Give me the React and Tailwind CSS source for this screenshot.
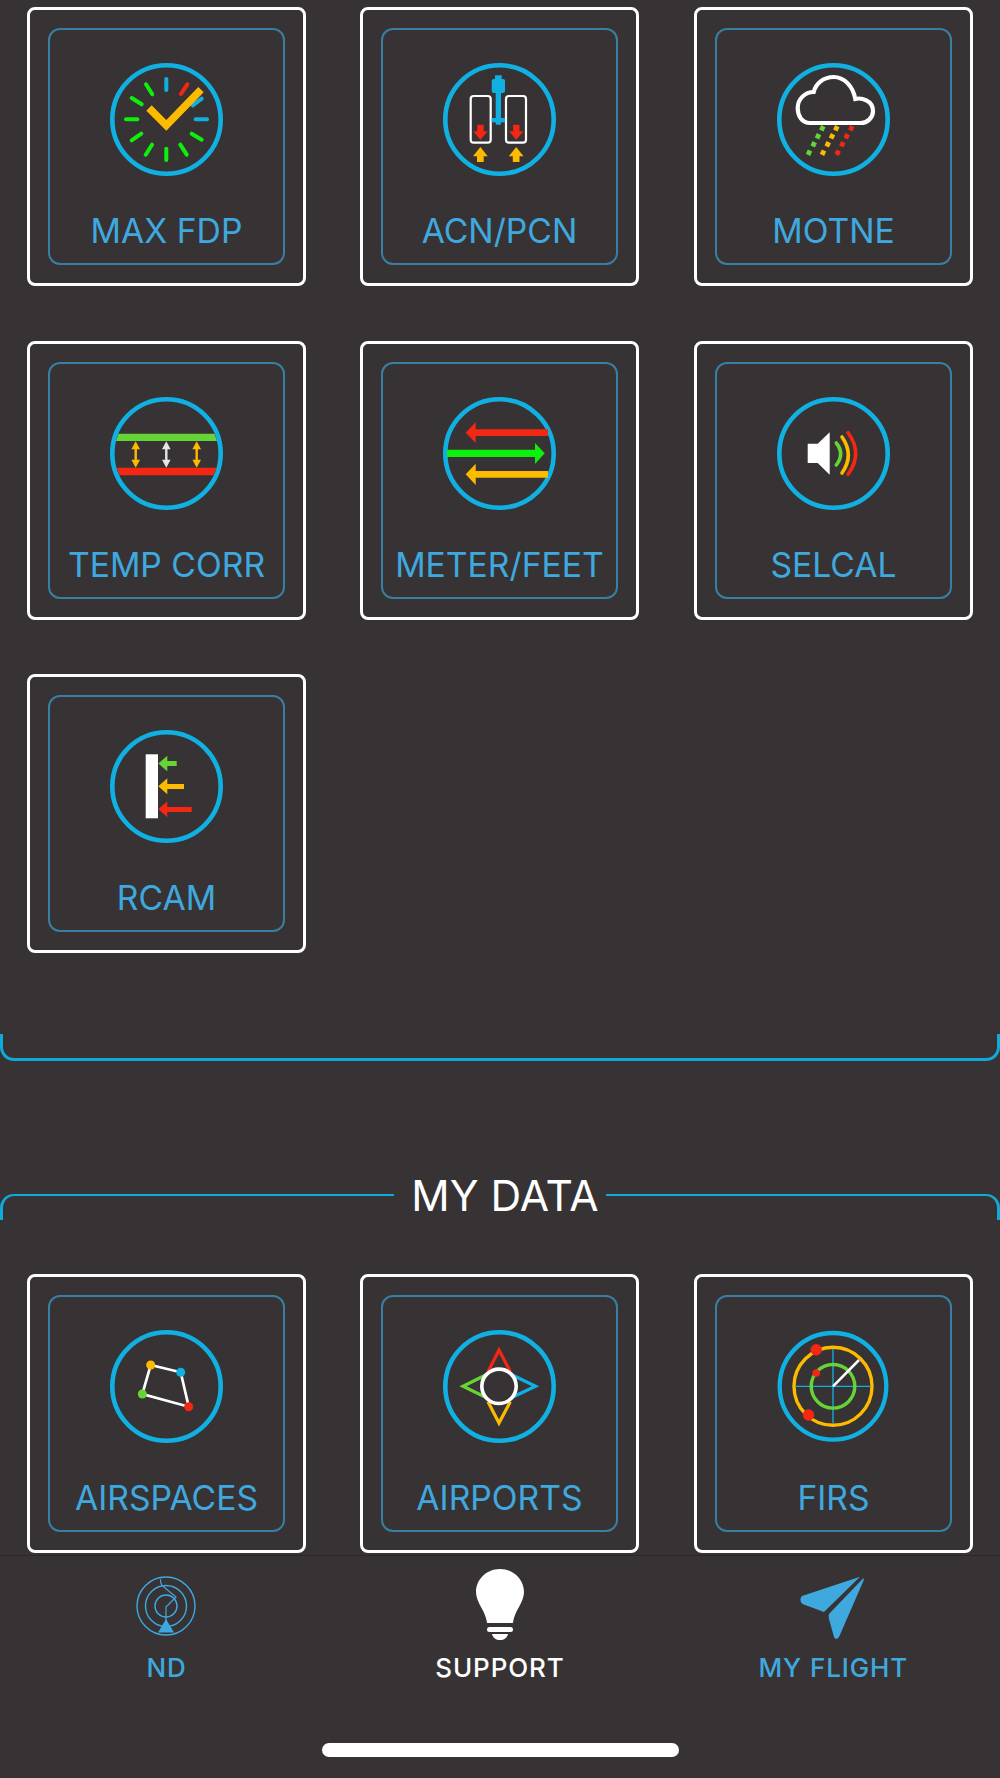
import React from 'react'

const BLUE = '#10b1e2'
const YELLOW = '#fdbb00'
const RED = '#f32713'
const GREEN = '#66d436'
const LIME = '#0cf00c'

// Shared circle frame for the tile icons
function Icon({ children, ring = true }) {
  return (
    <svg width="113" height="113" viewBox="0 0 113 113" fill="none" className="block shrink-0">
      {ring && <circle cx="56.5" cy="56.5" r="54.2" stroke={BLUE} strokeWidth="4.6" />}
      {children}
    </svg>
  )
}

function MaxFdpIcon() {
  const ticks = [
    [56.3, 16, 56.3, 27, BLUE],
    [77.3, 21.3, 71, 31, RED],
    [91.7, 35.7, 82.7, 42.3, BLUE],
    [85.7, 56.3, 97, 56.3, BLUE],
    [81.7, 70.7, 91.7, 76.7, LIME],
    [70.3, 81.7, 76.7, 91.7, LIME],
    [56.3, 85.7, 56.3, 97, LIME],
    [42, 81.7, 35.7, 91.7, LIME],
    [31.3, 70.7, 21.7, 77.3, LIME],
    [16, 56.3, 27.3, 56.3, LIME],
    [21.7, 35, 31.7, 41.3, LIME],
    [36, 21.3, 42.3, 31.3, LIME],
  ]
  return (
    <Icon>
      {ticks.map(([x1, y1, x2, y2, c], i) => (
        <line key={i} x1={x1} y1={y1} x2={x2} y2={y2} stroke={c} strokeWidth="4" strokeLinecap="round" />
      ))}
      <path d="M39 45 L56.3 62.3 L91 26.7" stroke={YELLOW} strokeWidth="7.5" />
    </Icon>
  )
}

function AcnIcon() {
  return (
    <Icon>
      <rect x="27.7" y="33" width="20" height="46.7" rx="3" stroke="#fff" strokeWidth="2.2" />
      <rect x="63" y="33" width="20" height="46.7" rx="3" stroke="#fff" strokeWidth="2.2" />
      <rect x="52" y="12.3" width="6.7" height="6" fill={BLUE} />
      <rect x="48.7" y="16" width="13.3" height="14" rx="2" fill={BLUE} />
      <rect x="52.7" y="28" width="5.3" height="33.7" rx="1" fill={BLUE} />
      <rect x="48.7" y="55" width="13.3" height="4.3" fill={BLUE} />
      {[0, 35.8].map(dx => (
        <g key={dx} transform={`translate(${dx} 0)`}>
          <path d="M34.3 61.7 H40.7 V68.3 H44.7 L37.4 76.7 L30.3 68.3 H34.3 Z" fill={RED} />
          <path d="M37.4 84 L44.7 93.3 H40.7 V99 H34 V93.3 H30 Z" fill={YELLOW} />
        </g>
      ))}
    </Icon>
  )
}

function MotneIcon() {
  const rows = [
    [[45.3, 65.3], [41, 73.3], [36.7, 81.3], [32, 89.7]],
    [[59.3, 65.3], [55, 73.3], [50.7, 81.3], [46, 89.7]],
    [[74.3, 65.3], [69.7, 73.3], [65.3, 81.3], [60.7, 89.7]],
  ]
  const colors = [GREEN, YELLOW, RED]
  return (
    <Icon>
      <path
        d="M33 60 C25 60 20.7 53 20.7 45 C20.7 36 28 29 36.7 29 C39 20 47 14 56.7 14 C67 14 76 23 78.3 36 C84 34.5 96 37 96 48 C96 55 90 60 84 60 Z"
        stroke="#fff"
        strokeWidth="4.2"
      />
      {rows.map((dots, i) =>
        dots.map(([x, y]) => (
          <rect
            key={`${i}-${y}`}
            x={x - 2.4}
            y={y - 2.4}
            width="4.8"
            height="4.8"
            fill={colors[i]}
            transform={`rotate(25 ${x} ${y})`}
          />
        ))
      )}
    </Icon>
  )
}

function TempIcon() {
  const arrows = [
    [25.7, YELLOW],
    [56.3, '#e6e6e6'],
    [86.7, YELLOW],
  ]
  return (
    <Icon>
      <path d="M8.5 36.7 H104.5 L107 44 H6 Z" fill={GREEN} />
      <path d="M6.5 70.7 H106.5 L103.5 78.3 H9.5 Z" fill={RED} />
      {arrows.map(([x, c]) => (
        <g key={x} fill={c}>
          <path d={`M${x} 44.3 L${x + 4.3} 52.3 H${x - 4.3} Z`} />
          <path d={`M${x} 70.7 L${x + 4.3} 62.7 H${x - 4.3} Z`} />
          <rect x={x - 1.2} y="52" width="2.4" height="11" />
        </g>
      ))}
    </Icon>
  )
}

function MeterIcon() {
  return (
    <Icon>
      <path d="M22.7 35.7 L32.7 25 V32.3 H105 V39 H32.7 V46 Z" fill={RED} />
      <path d="M101.7 56.3 L92 46 V52.7 H4 V60 H92 V67 Z" fill={LIME} />
      <path d="M22.7 77.3 L32.7 66.7 V74 H105 V80.7 H32.7 V88 Z" fill={YELLOW} />
    </Icon>
  )
}

function SelcalIcon() {
  return (
    <Icon>
      <path d="M30.7 46.7 H40.7 L52.7 35.3 V77.7 L40.7 66 H30.7 Z" fill="#fff" />
      <path d="M59.3 46 Q68 56.8 59.3 68" stroke={GREEN} strokeWidth="3.6" strokeLinecap="round" />
      <path d="M65 40 Q77.6 58 65 76" stroke={YELLOW} strokeWidth="3.6" strokeLinecap="round" />
      <path d="M71 35.7 Q86.4 56.5 71 77.3" stroke={RED} strokeWidth="3.6" strokeLinecap="round" />
    </Icon>
  )
}

function RcamIcon() {
  return (
    <Icon>
      <rect x="35.7" y="24.3" width="12.3" height="64" fill="#fff" />
      <path d="M48.3 33.5 L57.3 25.7 V31 H66.7 V36 H57.3 V41.3 Z" fill={GREEN} />
      <path d="M48.3 56.3 L57.3 48.3 V54 H74 V59 H57.3 V64.3 Z" fill={YELLOW} />
      <path d="M48.3 79.3 L57.3 71.3 V77 H81.7 V82 H57.3 V87.3 Z" fill={RED} />
    </Icon>
  )
}

function AirspacesIcon() {
  return (
    <Icon>
      <path d="M40.7 35 L70.7 42.3 L78.7 76.7 L32.3 64 Z" stroke="#fff" strokeWidth="2.7" />
      <circle cx="40.7" cy="35" r="4.5" fill={YELLOW} />
      <circle cx="70.7" cy="42.3" r="4.5" fill={BLUE} />
      <circle cx="78.7" cy="76.7" r="4.5" fill={RED} />
      <circle cx="32.3" cy="64" r="4.5" fill={GREEN} />
    </Icon>
  )
}

function AirportsIcon() {
  return (
    <Icon>
      <path d="M45 41.7 L56 20 L67.3 41.7" stroke={RED} strokeWidth="3.2" />
      <path d="M42.7 45 L20 56.3 L42.7 67.3" stroke={GREEN} strokeWidth="3.2" />
      <path d="M69.3 45 L92.5 56.3 L69.3 67.3" stroke={BLUE} strokeWidth="3.2" />
      <path d="M45 71.7 L56 93 L67.3 71.7" stroke={YELLOW} strokeWidth="3.2" />
      <circle cx="56" cy="56.3" r="17.2" stroke="#fff" strokeWidth="3.6" />
    </Icon>
  )
}

function FirsIcon() {
  return (
    <Icon ring={false}>
      <circle cx="56" cy="56.3" r="53.3" stroke={BLUE} strokeWidth="4.3" />
      <circle cx="56" cy="56.3" r="39" stroke={YELLOW} strokeWidth="3.4" />
      <path d="M18.8 56.3 H93.2 M56 19 V93.3" stroke={BLUE} strokeWidth="1.3" />
      <circle cx="56" cy="56.3" r="21.8" stroke={GREEN} strokeWidth="3.4" />
      <line x1="56" y1="56.3" x2="82" y2="30" stroke="#fff" strokeWidth="2.5" />
      <circle cx="39.2" cy="19.7" r="5.7" fill={RED} />
      <circle cx="39.2" cy="43" r="3.8" fill={RED} />
      <circle cx="31.5" cy="85" r="5.7" fill={RED} />
    </Icon>
  )
}

function Tile({ label, icon }) {
  return (
    <div className="w-[279px] h-[279px] border-[3px] border-white rounded-[8px] p-[18px]">
      <div className="h-full border-2 border-[#387fa3] rounded-[12px] flex flex-col items-center pt-[33px]">
        {icon}
        <div className="mt-[35px] text-[33.7px] leading-[40px] text-[#3fa9df] font-['Inter',sans-serif] whitespace-nowrap">
          {label}
        </div>
      </div>
    </div>
  )
}

const topTiles = [
  ['MAX FDP', <MaxFdpIcon />],
  ['ACN/PCN', <AcnIcon />],
  ['MOTNE', <MotneIcon />],
  ['TEMP CORR', <TempIcon />],
  ['METER/FEET', <MeterIcon />],
  ['SELCAL', <SelcalIcon />],
  ['RCAM', <RcamIcon />],
]

const dataTiles = [
  ['AIRSPACES', <AirspacesIcon />],
  ['AIRPORTS', <AirportsIcon />],
  ['FIRS', <FirsIcon />],
]

function TileGrid({ tiles }) {
  return (
    <div className="grid grid-cols-[333px_334px_279px] gap-y-[54.5px] px-[27px]">
      {tiles.map(([label, icon]) => (
        <Tile key={label} label={label} icon={icon} />
      ))}
    </div>
  )
}

function NdIcon() {
  return (
    <svg width="60" height="60" viewBox="0 0 60 60" fill="none" stroke="#3fa9df" strokeWidth="1.4" className="mt-[3px] mr-[2px]">
      <circle cx="30" cy="30" r="29" />
      <circle cx="30" cy="30" r="20.5" />
      <circle cx="30" cy="30" r="11" />
      <path d="M25 3 C23 6 26 7 25.5 9 L40 21 L30 31 V46" strokeWidth="1.2" />
      <path d="M30 43 L38 56.5 H22 Z" fill="#3fa9df" stroke="none" />
    </svg>
  )
}

function BulbIcon() {
  return (
    <svg width="48" height="71" viewBox="0 0 48 71" fill="#fff">
      <path d="M24 0 C38 0 48 11 48 23 C48 34 38 42 37 54 H11 C10 42 0 34 0 23 C0 11 10 0 24 0 Z" />
      <rect x="11" y="58" width="26" height="5" rx="2.5" />
      <path d="M16 65 H32 C31 69 28 71 24 71 C20 71 17 69 16 65 Z" />
    </svg>
  )
}

function PlaneIcon() {
  return (
    <svg width="64" height="64" viewBox="0 0 64 64" fill="#3fa9df" className="mt-[7px] mr-[3px]">
      <path d="M60 0.7 L2 20 Q-1.5 24 2.5 28 L24 36 Z" />
      <path d="M63.5 2 L29 38 Q28.5 40 29 43 L34 61 Q36 65 39 61 L63.8 4 Z" />
    </svg>
  )
}

function NavItem({ icon, label, active }) {
  return (
    <div className="flex flex-col items-center">
      <div className="h-[71px] flex items-center justify-center">{icon}</div>
      <div className={`mt-[13px] text-[26px] leading-[30px] font-medium tracking-[0.9px] font-['Inter',sans-serif] ${active ? 'text-white' : 'text-[#3fa9df]'}`}>
        {label}
      </div>
    </div>
  )
}

export default function App() {
  return (
    <div className="w-[1000px] h-[1778px] overflow-hidden bg-[#373334] pt-[7px]">
      <TileGrid tiles={topTiles} />

      {/* Closing bracket of the section above */}
      <div className="mt-[81px] h-[27px] border-x-[3px] border-b-[3px] border-[#0fa9da] rounded-b-[14px]" />

      {/* MY DATA header */}
      <div className="mt-[108px] h-[50px] flex items-start">
        <div className="mt-[25px] w-[394px] h-[26px] border-l-[3px] border-t-2 border-[#0fa9da] rounded-tl-[14px]" />
        <div className="w-[212px] pl-[10px] pt-[2px] text-center text-[42.5px] leading-[50px] text-white font-['Inter',sans-serif]">MY DATA</div>
        <div className="mt-[25px] w-[394px] h-[26px] border-r-[3px] border-t-2 border-[#0fa9da] rounded-tr-[14px]" />
      </div>

      <div className="mt-[54.5px]">
        <TileGrid tiles={dataTiles} />
      </div>

      {/* Bottom tab bar */}
      <div className="mt-[2px] border-t border-[#2b2829] grid grid-cols-3 pt-[13px]">
        <NavItem icon={<NdIcon />} label="ND" />
        <NavItem icon={<BulbIcon />} label="SUPPORT" active />
        <NavItem icon={<PlaneIcon />} label="MY FLIGHT" />
      </div>

      <div className="mt-[60.5px] mx-auto w-[357px] h-[14px] rounded-full bg-white" />
    </div>
  )
}
